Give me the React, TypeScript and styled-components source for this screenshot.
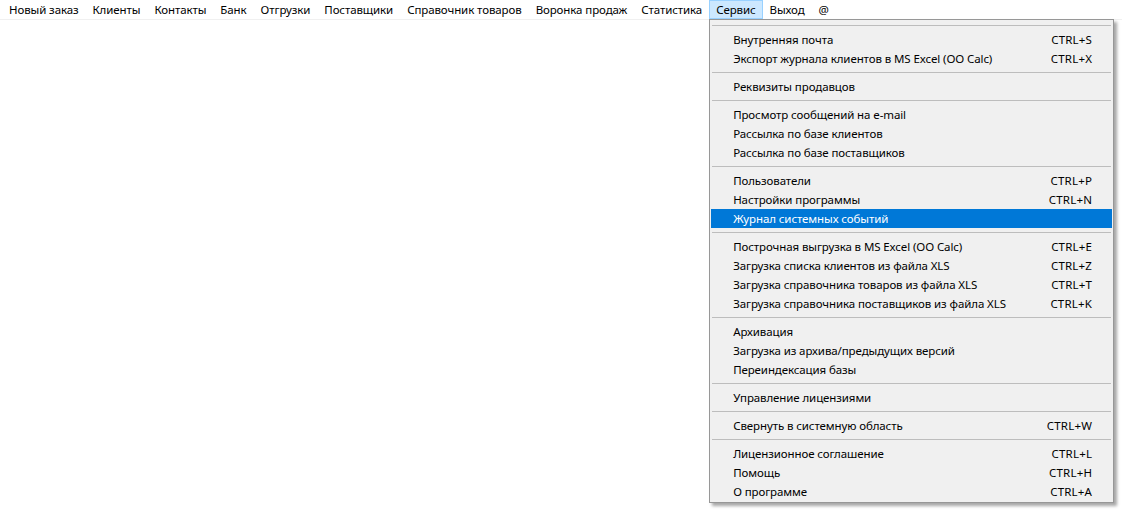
import React from 'react'
import styled, { createGlobalStyle } from 'styled-components'

const GlobalStyle = createGlobalStyle`
  html, body {
    margin: 0;
    padding: 0;
    background: #ffffff;
  }
  body {
    font-family: "Noto Sans", "Liberation Sans", sans-serif;
    font-size: 11.5px;
    letter-spacing: -0.1px;
    color: #000000;
  }
`

const Window = styled.div`
  width: 1122px;
  height: 511px;
  background: #ffffff;
  overflow: hidden;
`

const MenuBar = styled.div`
  display: flex;
  align-items: stretch;
  height: 19px;
  padding-left: 2px;
  border-bottom: 1px solid #f0f0f0;
  background: #ffffff;
`

const BarItem = styled.div<{ $open?: boolean }>`
  position: relative;
  display: flex;
  align-items: center;
  padding: 0 6px;
  line-height: 17px;
  white-space: nowrap;
  border: 1px solid ${(p) => (p.$open ? '#99d1ff' : 'transparent')};
  background: ${(p) => (p.$open ? '#cce8ff' : 'transparent')};
`

const Dropdown = styled.div`
  position: absolute;
  top: 18px;
  left: -1px;
  width: 401px;
  padding: 1px;
  background: #f0f0f0;
  border: 1px solid #979797;
  box-shadow: 3px 3px 3px rgba(0, 0, 0, 0.35);
  z-index: 10;
`

const Separator = styled.div`
  height: 9px;
  display: flex;
  align-items: center;
  padding: 0 1px;

  &::after {
    content: '';
    flex: 1;
    height: 1px;
    background: #bdbdbd;
  }
`

const Row = styled.div<{ $active?: boolean }>`
  display: flex;
  justify-content: space-between;
  align-items: center;
  height: 19px;
  padding: 0 20px 0 22px;
  white-space: nowrap;
  background: ${(p) => (p.$active ? '#0078d7' : 'transparent')};
  color: ${(p) => (p.$active ? '#ffffff' : '#000000')};
`

const Shortcut = styled.span`
  letter-spacing: 0.2px;
`

const topMenu = [
  'Новый заказ',
  'Клиенты',
  'Контакты',
  'Банк',
  'Отгрузки',
  'Поставщики',
  'Справочник товаров',
  'Воронка продаж',
  'Статистика',
  'Сервис',
  'Выход',
  '@',
]

type Entry = [string, string?]

const groups: Entry[][] = [
  [
    ['Внутренняя почта', 'CTRL+S'],
    ['Экспорт журнала клиентов в MS Excel (OO Calc)', 'CTRL+X'],
  ],
  [['Реквизиты продавцов']],
  [
    ['Просмотр сообщений на e-mail'],
    ['Рассылка по базе клиентов'],
    ['Рассылка по базе поставщиков'],
  ],
  [
    ['Пользователи', 'CTRL+P'],
    ['Настройки программы', 'CTRL+N'],
    ['Журнал системных событий'],
  ],
  [
    ['Построчная выгрузка в MS Excel (OO Calc)', 'CTRL+E'],
    ['Загрузка списка клиентов из файла XLS', 'CTRL+Z'],
    ['Загрузка справочника товаров из файла XLS', 'CTRL+T'],
    ['Загрузка справочника поставщиков из файла XLS', 'CTRL+K'],
  ],
  [
    ['Архивация'],
    ['Загрузка из архива/предыдущих версий'],
    ['Переиндексация базы'],
  ],
  [['Управление лицензиями']],
  [['Свернуть в системную область', 'CTRL+W']],
  [
    ['Лицензионное соглашение', 'CTRL+L'],
    ['Помощь', 'CTRL+H'],
    ['О программе', 'CTRL+A'],
  ],
]

const ServiceMenu: React.FC = () => (
  <Dropdown>
    {groups.map((group, gi) => (
      <React.Fragment key={gi}>
        <Separator />
        {group.map(([label, key]) => (
          <Row key={label} $active={label === 'Журнал системных событий'}>
            <span>{label}</span>
            {key && <Shortcut>{key}</Shortcut>}
          </Row>
        ))}
      </React.Fragment>
    ))}
  </Dropdown>
)

export default function App() {
  return (
    <Window>
      <GlobalStyle />
      <MenuBar>
        {topMenu.map((name) => (
          <BarItem key={name} $open={name === 'Сервис'}>
            {name}
            {name === 'Сервис' && <ServiceMenu />}
          </BarItem>
        ))}
      </MenuBar>
    </Window>
  )
}
